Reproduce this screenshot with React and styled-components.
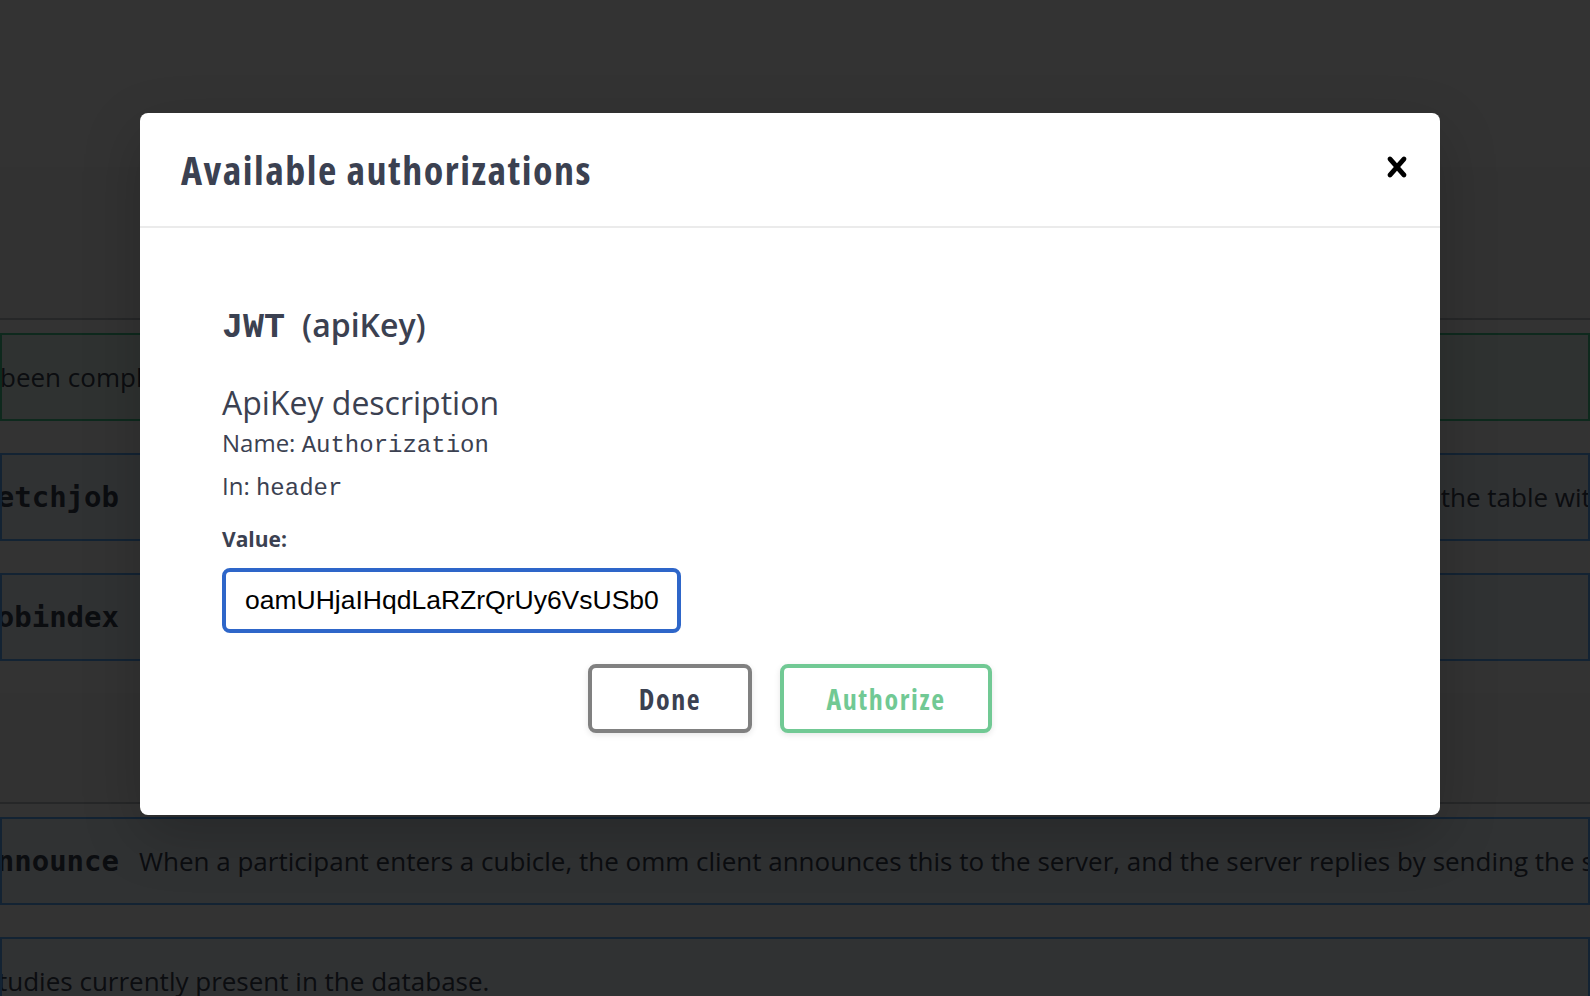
import React from 'react';
import styled, { createGlobalStyle } from 'styled-components';

const GlobalStyle = createGlobalStyle`
  html, body {
    margin: 0;
    padding: 0;
  }
  body {
    font-family: "Open Sans", sans-serif;
    background: #fff;
  }
  * {
    box-sizing: border-box;
  }
`;

const headingFont = `"Open Sans", sans-serif`;

const Page = styled.div`
  position: relative;
  width: 1590px;
  height: 996px;
  overflow: hidden;
  background: #fff;
`;

// page behind the dialog
const InfoArea = styled.div`
  height: 167px;
  background: #fff;
`;

const TagHeader = styled.div`
  height: ${({ h }) => h}px;
  background: #f8f8f8;
  border-bottom: 2px solid rgba(59, 65, 81, 0.3);
  margin-bottom: 13px;
`;

const OpBlock = styled.div`
  height: 88px;
  margin-bottom: 32px;
  border: 2px solid ${({ color }) => color};
  background: ${({ bg }) => bg};
  display: flex;
  align-items: center;
  overflow: hidden;
  white-space: nowrap;
`;

const PathClip = styled.div`
  flex: none;
  width: 117px;
  display: flex;
  justify-content: flex-end;
  overflow: hidden;
  font-family: "DejaVu Sans Mono", monospace;
  font-weight: 700;
  font-size: 29px;
  color: #3b4151;
`;

const Summary = styled.div`
  flex: none;
  margin-left: ${({ offset }) => offset}px;
  font-family: "Open Sans", sans-serif;
  font-size: 26px;
  color: #3b4151;
`;

const Hidden = styled.span`
  display: inline-block;
  width: ${({ w }) => w}px;
  overflow: hidden;
  vertical-align: top;
`;

// dialog
const Overlay = styled.div`
  position: absolute;
  inset: 0;
  background: rgba(0, 0, 0, 0.8);
  display: flex;
  justify-content: center;
  align-items: flex-start;
  padding: 113px 10px 0 0;
`;

const Modal = styled.div`
  width: 1300px;
  background: #fff;
  border-radius: 8px;
  box-shadow: 0 20px 60px rgba(0, 0, 0, 0.2);
  display: flex;
  flex-direction: column;
`;

const ModalHeader = styled.div`
  height: 115px;
  padding: 0 23px 0 41px;
  display: flex;
  align-items: center;
  justify-content: space-between;
  border-bottom: 2px solid #ebebeb;
`;

const Title = styled.h3`
  margin: 0;
  font-family: ${headingFont};
  font-stretch: 75%;
  letter-spacing: 1.5px;
  font-size: 40px;
  font-weight: 700;
  color: #3b4151;
`;

const CloseButton = styled.button`
  width: 40px;
  height: 40px;
  margin-top: -5px;
  padding: 0;
  border: none;
  background: none;
  display: flex;
  cursor: pointer;
`;

const ModalBody = styled.div`
  padding: 77px 82px 82px;
  display: flex;
  flex-direction: column;
  align-items: flex-start;
`;

const SchemeTitle = styled.h4`
  margin: 0;
  font-family: ${headingFont};
  font-size: 32px;
  line-height: 40px;
  font-weight: 600;
  color: #3b4151;
`;

const SchemeCode = styled.code`
  font-family: "Liberation Mono", monospace;
  font-weight: 700;
  font-size: 35px;
  margin-right: 17px;
`;

const Description = styled.p`
  margin: 35px 0 0;
  font-family: "Open Sans", sans-serif;
  font-size: 32px;
  line-height: 40px;
  color: #3b4151;
`;

const Field = styled.p`
  margin: ${({ gap }) => gap}px 0 0;
  font-family: "Open Sans", sans-serif;
  font-size: 24px;
  line-height: 32px;
  color: #3b4151;
`;

const Mono = styled.code`
  font-family: "Liberation Mono", monospace;
  font-size: 24px;
`;

const Label = styled.label`
  margin-top: 18px;
  font-family: ${headingFont};
  font-size: 21px;
  line-height: 32px;
  font-weight: 700;
  color: #3b4151;
`;

const Input = styled.input`
  margin-top: 13px;
  width: 459px;
  height: 65px;
  padding: 0 0 0 19px;
  border: 4px solid #2e66c9;
  border-radius: 8px;
  outline: none;
  font-family: "Liberation Sans", Arial, sans-serif;
  font-size: 26.5px;
  color: #000;
`;

const Actions = styled.div`
  margin-top: 31px;
  align-self: stretch;
  display: flex;
  justify-content: center;
  gap: 28px;
`;

const Button = styled.button`
  width: ${({ w }) => w}px;
  height: 69px;
  border: 4px solid ${({ tone }) => tone};
  border-radius: 8px;
  background: #fff;
  box-shadow: 0 2px 6px rgba(0, 0, 0, 0.1);
  font-family: ${headingFont};
  font-stretch: 75%;
  letter-spacing: 1.6px;
  font-size: 28px;
  font-weight: 700;
  color: ${({ ink }) => ink};
  cursor: pointer;
`;

const CloseIcon = () => (
  <svg width="40" height="40" viewBox="0 0 20 20" aria-hidden="true">
    <path
      fill="#000"
      d="M14.348 14.849c-.469.469-1.229.469-1.697 0L10 11.819l-2.651 3.029c-.469.469-1.229.469-1.697 0-.469-.469-.469-1.229 0-1.697l2.758-3.15-2.759-3.152c-.469-.469-.469-1.228 0-1.697.469-.469 1.228-.469 1.697 0L10 8.183l2.651-3.031c.469-.469 1.228-.469 1.697 0 .469.469.469 1.229 0 1.697l-2.758 3.152 2.758 3.15c.469.469.469 1.229 0 1.698z"
    />
  </svg>
);

const App = () => {
  return (
    <Page>
      <GlobalStyle />
      <InfoArea />
      <TagHeader h={153} />
      <OpBlock color="#49cc90" bg="rgba(73, 204, 144, 0.1)">
        <Summary offset={-2}>been completed by the client.</Summary>
      </OpBlock>
      <OpBlock color="#61affe" bg="rgba(97, 175, 254, 0.1)">
        <PathClip>
          <span>/fetchjob</span>
        </PathClip>
        <Summary offset={20}>
          <Hidden w={1295}>Fetches the next job that has not been processed yet and removes it from</Hidden>
          {' '}the table with all open jobs.
        </Summary>
      </OpBlock>
      <OpBlock color="#61affe" bg="rgba(97, 175, 254, 0.1)">
        <PathClip>
          <span>/jobindex</span>
        </PathClip>
        <Summary offset={20}>Returns an index of all jobs.</Summary>
      </OpBlock>
      <TagHeader h={111} />
      <OpBlock color="#61affe" bg="rgba(97, 175, 254, 0.1)">
        <PathClip>
          <span>/announce</span>
        </PathClip>
        <Summary offset={20}>
          When a participant enters a cubicle, the omm client announces this to the server, and the server replies by sending the study to the client.
        </Summary>
      </OpBlock>
      <OpBlock color="#61affe" bg="rgba(97, 175, 254, 0.1)">
        <Summary offset={-4}>tudies currently present in the database.</Summary>
      </OpBlock>

      <Overlay>
        <Modal>
          <ModalHeader>
            <Title>Available authorizations</Title>
            <CloseButton aria-label="Close">
              <CloseIcon />
            </CloseButton>
          </ModalHeader>
          <ModalBody>
            <SchemeTitle>
              <SchemeCode>JWT</SchemeCode>(apiKey)
            </SchemeTitle>
            <Description>ApiKey description</Description>
            <Field gap={4}>
              Name: <Mono>Authorization</Mono>
            </Field>
            <Field gap={8}>
              In: <Mono>header</Mono>
            </Field>
            <Label htmlFor="api-value">Value:</Label>
            <Input id="api-value" type="text" defaultValue="oamUHjaIHqdLaRZrQrUy6VsUSb0" />
            <Actions>
              <Button w={164} tone="#808080" ink="#3b4151">Done</Button>
              <Button w={212} tone="#71c994" ink="#71c994">Authorize</Button>
            </Actions>
          </ModalBody>
        </Modal>
      </Overlay>
    </Page>
  );
};

export default App;
